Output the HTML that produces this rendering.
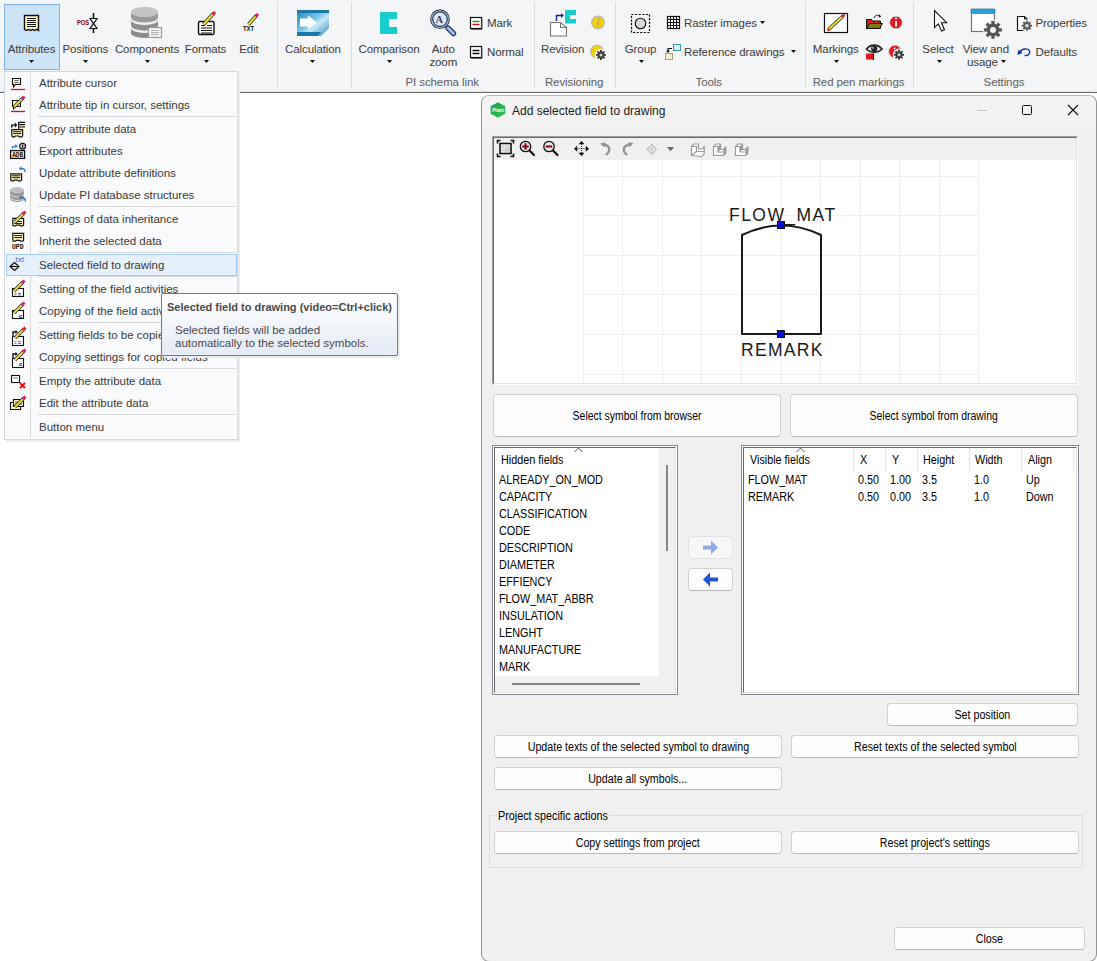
<!DOCTYPE html>
<html><head><meta charset="utf-8">
<style>
html,body{margin:0;padding:0;width:1097px;height:961px;overflow:hidden;background:#fff;font-family:"Liberation Sans",sans-serif;}
.a{position:absolute;}
.t{position:absolute;white-space:nowrap;line-height:14px;font-size:12px;}
.c{position:absolute;white-space:nowrap;line-height:14px;font-size:12px;width:120px;margin-left:-60px;text-align:center;}
#ribbon .t,#ribbon .c{letter-spacing:-0.1px;font-size:11.5px;}
svg{position:absolute;overflow:visible;}
#ribbon{position:absolute;left:0;top:0;width:1097px;height:92px;background:#f4f5f7;border-bottom:1px solid #6b6b6b;}
.rt{color:#3b3b3b;}
.gl{color:#5e5e5e;}
.sep{position:absolute;top:2px;width:1px;height:86px;background:#dcdcdc;}
.dd{position:absolute;width:5px;height:3px;background:#111;clip-path:polygon(0 0,100% 0,50% 100%);}
#menu{position:absolute;left:4px;top:71px;width:232px;height:367px;background:#f9fafc;border:1px solid #d6d7da;box-shadow:inset -1px -1px 0 #fff,2px 2px 0 #ebebeb;}
.mi{position:absolute;left:39px;color:#3a3a3a;font-size:11.5px;line-height:14px;white-space:nowrap;}
.ms{position:absolute;left:38px;width:198px;height:1px;background:#d9d9dc;}
#dlg{position:absolute;left:481px;top:95px;width:614px;height:865px;background:#f0f0f0;border:1px solid #949494;border-top-color:#b8b8b8;border-radius:8px;}
.btn{position:absolute;background:#fdfdfd;border:1px solid #d0d0d0;border-bottom-color:#b8b8b8;border-radius:4px;box-sizing:border-box;font-size:12px;color:#000;text-align:center;white-space:nowrap;}
.lst{position:absolute;background:#fff;box-sizing:border-box;}
.lt{position:absolute;font-size:12px;line-height:14px;color:#000;white-space:nowrap;}
.sx{display:inline-block;transform:scaleX(0.89);transform-origin:50% 50%;}
.sxb{display:inline-block;transform:scaleX(0.87);transform-origin:50% 50%;}
.sx0{display:inline-block;transform:scaleX(0.9);transform-origin:0 50%;}
</style></head><body>
<div id="ribbon">
  <div class="a" style="left:0;top:91px;width:1097px;height:1px;background:#e1e2e4;"></div>
  <!-- Attributes highlighted -->
  <div class="a" style="left:4px;top:4px;width:54px;height:64px;background:#cce4f7;border:1px solid #7eb4ea;"></div>
  <div class="c rt" style="left:31.5px;top:42px;">Attributes</div>
  <div class="dd" style="left:29px;top:60px;"></div>
  <div class="c rt" style="left:85.4px;top:42px;">Positions</div>
  <div class="dd" style="left:83px;top:60px;"></div>
  <div class="c rt" style="left:147px;top:42px;">Components</div>
  <div class="dd" style="left:145px;top:60px;"></div>
  <div class="c rt" style="left:205.5px;top:42px;">Formats</div>
  <div class="dd" style="left:204px;top:60px;"></div>
  <div class="c rt" style="left:249px;top:42px;">Edit</div>
  <div class="sep" style="left:277px;"></div>
  <div class="c rt" style="left:313px;top:42px;">Calculation</div>
  <div class="dd" style="left:310px;top:60px;"></div>
  <div class="sep" style="left:351px;"></div>
  <div class="c rt" style="left:389px;top:42px;">Comparison</div>
  <div class="dd" style="left:387px;top:60px;"></div>
  <div class="c rt" style="left:443.3px;top:42px;">Auto</div>
  <div class="c rt" style="left:443.3px;top:55px;">zoom</div>
  <div class="t rt" style="left:487px;top:16px;">Mark</div>
  <div class="t rt" style="left:487px;top:45px;">Normal</div>
  <div class="c gl" style="left:442.2px;top:75px;">PI schema link</div>
  <div class="sep" style="left:534px;"></div>
  <div class="c rt" style="left:562.6px;top:42px;">Revision</div>
  <div class="c gl" style="left:574.1px;top:75px;">Revisioning</div>
  <div class="sep" style="left:615px;"></div>
  <div class="c rt" style="left:640.5px;top:42px;">Group</div>
  <div class="dd" style="left:639px;top:60px;"></div>
  <div class="t rt" style="left:684px;top:16px;">Raster images</div>
  <div class="dd" style="left:760px;top:21px;"></div>
  <div class="t rt" style="left:684px;top:45px;">Reference drawings</div>
  <div class="dd" style="left:791px;top:50px;"></div>
  <div class="c gl" style="left:708.8px;top:75px;">Tools</div>
  <div class="sep" style="left:805px;"></div>
  <div class="c rt" style="left:835.8px;top:42px;">Markings</div>
  <div class="dd" style="left:834px;top:60px;"></div>
  <div class="c gl" style="left:858.5px;top:75px;">Red pen markings</div>
  <div class="sep" style="left:913px;"></div>
  <div class="c rt" style="left:938px;top:42px;">Select</div>
  <div class="dd" style="left:937px;top:60px;"></div>
  <div class="c rt" style="left:985.8px;top:42px;">View and</div>
  <div class="t rt" style="left:967px;top:55px;">usage</div>
  <div class="dd" style="left:1001px;top:60px;"></div>
  <div class="t rt" style="left:1035.5px;top:16px;">Properties</div>
  <div class="t rt" style="left:1035.5px;top:45px;">Defaults</div>
  <div class="c gl" style="left:1004px;top:75px;">Settings</div>
  <!-- ICONS -->
  <svg style="left:0;top:0" width="1097" height="92" viewBox="0 0 1097 92">
    <!-- Attributes icon -->
    <path d="M24.5 15.5 h14 v15 l-2 -1.2 -2 1.2 -2 -1.2 -2 1.2 -2 -1.2 -2 1.2 -2 -1.2 z" fill="#fff7c2" stroke="#111" stroke-width="1.4"/>
    <g stroke="#111" stroke-width="1.1"><path d="M27 18.5h9M27 20.5h9M27 22.5h9M27 24.5h9M27 26.5h9"/></g>
    <!-- Positions -->
    <text x="77" y="25" font-family="Liberation Sans" font-weight="bold" font-size="6.8" fill="#7a0000" textLength="12.2" lengthAdjust="spacingAndGlyphs">POS</text>
    <path d="M93.5 13v20" stroke="#111" stroke-width="1.6"/>
    <path d="M90 18.5h7l-7 10h7z" fill="#fff" stroke="#111" stroke-width="1.2"/>
    <!-- Components database -->
    <g fill="#9a9a9a">
      <ellipse cx="144.5" cy="12" rx="13.5" ry="5" fill="#c4c4c4"/>
      <path d="M131 12v6a13.5 5 0 0 0 27 0v-6a13.5 5 0 0 1 -27 0z"/>
      <path d="M131 20v6a13.5 5 0 0 0 27 0v-6a13.5 5 0 0 1 -27 0z" fill="#8e8e8e"/>
      <path d="M131 28v5a13.5 5 0 0 0 27 0v-5a13.5 5 0 0 1 -27 0z" fill="#8a8a8a"/>
    </g>
    <path d="M131 18a13.5 5 0 0 0 27 0M131 26a13.5 5 0 0 0 27 0" stroke="#e8e8e8" stroke-width="1" fill="none"/>
    <rect x="148.5" y="27.5" width="13" height="10" fill="#f4f4f4" stroke="#9a9a9a" stroke-width="1.2"/>
    <path d="M151 30.5h8M151 32.5h8M151 34.5h8" stroke="#a8a8a8" stroke-width="0.9"/>
    <!-- Formats -->
    <rect x="198.5" y="21.5" width="15.5" height="13" rx="1.5" fill="#fff" stroke="#111" stroke-width="1.4"/>
    <path d="M201 25.5h4M201 28h11M201 30.5h11M201 33h11M207 25.5h5" stroke="#111" stroke-width="1.2"/>
    <path d="M203.5 24.5 L213.5 13.5" stroke="#222" stroke-width="3.6"/>
    <path d="M203.5 24.5 L213.5 13.5" stroke="#f0e030" stroke-width="2.2"/>
    <path d="M212.5 14.6 L215 12" stroke="#e4204a" stroke-width="3.2"/>
    <!-- Edit TXT -->
    <text x="243" y="31.3" font-family="Liberation Sans" font-weight="bold" font-size="7.5" fill="#111" textLength="11.2" lengthAdjust="spacingAndGlyphs">TXT</text>
    <path d="M248.5 24.5 L256.5 15.5" stroke="#222" stroke-width="3.4"/>
    <path d="M248.5 24.5 L256.5 15.5" stroke="#f0e030" stroke-width="2"/>
    <path d="M255.5 16.6 L258 14" stroke="#e4204a" stroke-width="3"/>
    <!-- Calculation -->
    <defs>
      <linearGradient id="calc" x1="0" y1="0" x2="1" y2="1">
        <stop offset="0" stop-color="#1e86b8"/><stop offset="0.45" stop-color="#7cc4e4"/><stop offset="0.6" stop-color="#c8e8f6"/><stop offset="1" stop-color="#2a8cbc"/>
      </linearGradient>
    </defs>
    <path d="M297 10h32v18l-8 8h-24z" fill="url(#calc)"/>
    <path d="M297 10h32v3h-32zM297 32h24l-3 4h-21z" fill="#1a78aa"/>
    <path d="M300 18.5h8v-3l9 7 -9 7v-3h-8z" fill="#fff"/>
    <!-- Comparison -->
    <path d="M380 12h17v7h-8v8h8v7h-17z" fill="#17cccc"/>
    <!-- Auto zoom -->
    <path d="M448 28 L453.5 33.5" stroke="#1c3664" stroke-width="5.4" stroke-linecap="round"/>
    <path d="M448 28 L453.5 33.5" stroke="#a2bde6" stroke-width="3" stroke-linecap="round"/>
    <circle cx="440" cy="19.2" r="9.3" fill="#d4e4f4" stroke="#34465f" stroke-width="1.2"/>
    <circle cx="440" cy="19.2" r="7.3" fill="#d8e8f6" stroke="#27385a" stroke-width="1.3"/>
    <text x="435.5" y="23.2" font-family="Liberation Serif" font-weight="bold" font-size="10.5" fill="#443a58">A</text>
    <!-- Mark -->
    <rect x="470.5" y="17.5" width="11" height="11" fill="#fff" stroke="#111" stroke-width="1.2"/>
    <path d="M482 18.5v11h-11" stroke="#666" stroke-width="1" fill="none"/>
    <path d="M472.5 21.5h7" stroke="#119911" stroke-width="1.4"/><path d="M472.5 24.5h7" stroke="#e01010" stroke-width="1.4"/>
    <!-- Normal -->
    <rect x="470.5" y="46.5" width="11" height="11" fill="#fff" stroke="#111" stroke-width="1.2"/>
    <path d="M482 47.5v11h-11" stroke="#666" stroke-width="1" fill="none"/>
    <path d="M472.5 50.5h7M472.5 53.5h7" stroke="#111" stroke-width="1.6"/>
    <!-- Revision -->
    <path d="M550.5 22.5h10l6 5v8.5h-16z" fill="#fff" stroke="#777" stroke-width="1.1"/>
    <path d="M560.5 22.5v5h6" fill="none" stroke="#777" stroke-width="1"/>
    <path d="M565 10h11v5h-6v4h6v4.5h-11z" fill="#17cccc"/>
    <path d="M556.5 21v-5.5h5" stroke="#0b2a9a" stroke-width="1.4" fill="none"/>
    <path d="M561 13l3 2.5 -3 2.5z" fill="#0b2a9a"/>
    <!-- info icons -->
    <circle cx="598" cy="22.5" r="6.3" fill="#f2cf00" stroke="#b8b8b8" stroke-width="1.2"/>
    <path d="M598.5 20.5l-1 6" stroke="#b0a080" stroke-width="1.4"/><circle cx="599" cy="18.5" r="0.9" fill="#b0a080"/>
    <circle cx="597" cy="51.5" r="6.3" fill="#f2cf00" stroke="#b8b8b8" stroke-width="1.2"/>
<circle cx="601" cy="54.9" r="6.2" fill="#ffffff"/><path d="M603.90 53.95 L606.00 53.95 L606.00 55.85 L603.90 55.85zM603.72 56.28 L605.21 57.76 L603.86 59.11 L602.38 57.62zM601.95 57.80 L601.95 59.90 L600.05 59.90 L600.05 57.80zM599.62 57.62 L598.14 59.11 L596.79 57.76 L598.28 56.28zM598.10 55.85 L596.00 55.85 L596.00 53.95 L598.10 53.95zM598.28 53.52 L596.79 52.04 L598.14 50.69 L599.62 52.18zM600.05 52.00 L600.05 49.90 L601.95 49.90 L601.95 52.00zM602.38 52.18 L603.86 50.69 L605.21 52.04 L603.72 53.52z" fill="#3a3a3a"/><circle cx="601" cy="54.9" r="3.4" fill="#3a3a3a"/><circle cx="601" cy="54.9" r="1.5" fill="#d4d4d4"/>
    <!-- Group -->
    <rect x="631.5" y="14.5" width="18" height="18" fill="none" stroke="#111" stroke-width="1.2" stroke-dasharray="2.2 1.4"/>
    <circle cx="640.5" cy="23.5" r="5.3" fill="#d8d8d8" stroke="#111" stroke-width="1.1"/>
    <!-- Raster grid -->
    <rect x="667.5" y="16.5" width="12" height="12" fill="#fff" stroke="#111" stroke-width="1.2"/>
    <path d="M670.5 16.5v12M673.5 16.5v12M676.5 16.5v12M667.5 19.5h12M667.5 22.5h12M667.5 25.5h12" stroke="#111" stroke-width="1"/>
    <!-- Reference drawings -->
    <rect x="673.5" y="44.5" width="7" height="6" fill="#d6eef4" stroke="#3a9aaa" stroke-width="1"/>
    <rect x="665.5" y="53.5" width="7" height="6" fill="#f4f0d0" stroke="#a8a470" stroke-width="1"/>
    <path d="M672 48.5h-4v3" stroke="#111" stroke-width="1.1" fill="none"/><path d="M666 50.5l2 2.5 2-2.5z" fill="#111"/>
    <!-- Markings -->
    <rect x="824.5" y="13.5" width="23" height="19" fill="#fff" stroke="#111" stroke-width="1.2"/>
    <path d="M828.5 29.5 L843 16" stroke="#222" stroke-width="3.4"/>
    <path d="M828.5 29.5 L843 16" stroke="#f0e030" stroke-width="2"/>
    <path d="M842 17 L844.5 14.5" stroke="#e4204a" stroke-width="3"/>
    <path d="M827.5 30.5l1.5-1.5" stroke="#e01010" stroke-width="2"/>
    <!-- folder -->
    <path d="M866.5 19.5h5l1 1.5h8v7.5h-14z" fill="#e01818" stroke="#111" stroke-width="1"/>
    <path d="M866.5 28.5l3-5h13l-3 5z" fill="#7a7a10" stroke="#111" stroke-width="1"/>
    <path d="M874 18c1-3 4-3.5 6-2" stroke="#111" stroke-width="1" fill="none"/><path d="M879 14.5l2.5 2 -2.8 1z" fill="#111"/>
    <!-- red info -->
    <circle cx="896" cy="22.5" r="6.3" fill="#e01824" stroke="#c8c8c8" stroke-width="1"/>
    <path d="M896 21v5.5" stroke="#fff" stroke-width="1.8"/><circle cx="896" cy="18.6" r="1" fill="#fff"/>
    <!-- eye -->
    <path d="M866.5 49c4-5.2 11.5-5.2 15.5 0c-4 4.4-11.5 4.4-15.5 0z" fill="#e8e8e8" stroke="#2a2a2a" stroke-width="1.8"/>
    <circle cx="874.2" cy="48.8" r="3.1" fill="#222"/><circle cx="873" cy="47.8" r="0.9" fill="#ddd"/>
    <rect x="866" y="53.5" width="7" height="6" fill="#e01818"/><path d="M873.5 53.5v6.5" stroke="#111" stroke-width="1.2"/>
    <!-- red info gear -->
    <circle cx="895" cy="51.5" r="6.3" fill="#e01824" stroke="#c8c8c8" stroke-width="1"/>
    <circle cx="894.5" cy="48.5" r="1" fill="#fff"/>
<circle cx="899" cy="54.8" r="6.2" fill="#ffffff"/><path d="M901.90 53.85 L904.00 53.85 L904.00 55.75 L901.90 55.75zM901.72 56.18 L903.21 57.66 L901.86 59.01 L900.38 57.52zM899.95 57.70 L899.95 59.80 L898.05 59.80 L898.05 57.70zM897.62 57.52 L896.14 59.01 L894.79 57.66 L896.28 56.18zM896.10 55.75 L894.00 55.75 L894.00 53.85 L896.10 53.85zM896.28 53.42 L894.79 51.94 L896.14 50.59 L897.62 52.08zM898.05 51.90 L898.05 49.80 L899.95 49.80 L899.95 51.90zM900.38 52.08 L901.86 50.59 L903.21 51.94 L901.72 53.42z" fill="#3a3a3a"/><circle cx="899" cy="54.8" r="3.4" fill="#3a3a3a"/><circle cx="899" cy="54.8" r="1.5" fill="#d4d4d4"/>
    <!-- Select cursor -->
    <path d="M934.5 10.5v17l3.8-3.6 3.2 7.2 3-1.4-3.1-7h5.2z" fill="#fff" stroke="#111" stroke-width="1.1"/>
    <!-- View and usage -->
    <rect x="971.5" y="9.5" width="23" height="22" fill="#fff" stroke="#777" stroke-width="1.2"/>
    <rect x="971" y="9" width="24" height="4.5" rx="1" fill="#27a0e0" stroke="#3070b0" stroke-width="0.6"/>
<circle cx="993" cy="29.9" r="10.1" fill="#f4f5f7"/><path d="M998.80 28.25 L1001.90 28.25 L1001.90 31.55 L998.80 31.55zM998.27 32.83 L1000.46 35.03 L998.13 37.36 L995.93 35.17zM994.65 35.70 L994.65 38.80 L991.35 38.80 L991.35 35.70zM990.07 35.17 L987.87 37.36 L985.54 35.03 L987.73 32.83zM987.20 31.55 L984.10 31.55 L984.10 28.25 L987.20 28.25zM987.73 26.97 L985.54 24.77 L987.87 22.44 L990.07 24.63zM991.35 24.10 L991.35 21.00 L994.65 21.00 L994.65 24.10zM995.93 24.63 L998.13 22.44 L1000.46 24.77 L998.27 26.97z" fill="#555"/><circle cx="993" cy="29.9" r="6.3" fill="#555"/><circle cx="993" cy="29.9" r="3" fill="#f4f5f7"/>
    <!-- Properties -->
    <path d="M1017.5 16.5h7l2.5 2.5v11.5h-9.5z" fill="#fff" stroke="#111" stroke-width="1.2"/><path d="M1024.5 16.5v2.5h2.5" fill="none" stroke="#111" stroke-width="1"/>
<circle cx="1026.9" cy="25.7" r="6.2" fill="#f4f5f7"/><path d="M1029.90 24.75 L1031.90 24.75 L1031.90 26.65 L1029.90 26.65zM1029.69 27.15 L1031.11 28.56 L1029.76 29.91 L1028.35 28.49zM1027.85 28.70 L1027.85 30.70 L1025.95 30.70 L1025.95 28.70zM1025.45 28.49 L1024.04 29.91 L1022.69 28.56 L1024.11 27.15zM1023.90 26.65 L1021.90 26.65 L1021.90 24.75 L1023.90 24.75zM1024.11 24.25 L1022.69 22.84 L1024.04 21.49 L1025.45 22.91zM1025.95 22.70 L1025.95 20.70 L1027.85 20.70 L1027.85 22.70zM1028.35 22.91 L1029.76 21.49 L1031.11 22.84 L1029.69 24.25z" fill="#555"/><circle cx="1026.9" cy="25.7" r="3.5" fill="#555"/><circle cx="1026.9" cy="25.7" r="1.8" fill="#dcdce8"/>
    <!-- Defaults -->
    <path d="M1020 52.5c1-4 8-5 9.5-1.5c1.2 3-2 5-5 4.5" stroke="#1030a0" stroke-width="1.4" fill="none"/>
    <path d="M1017.5 55l1-5.5 4 3.5z" fill="#1030a0"/>
  </svg>
</div>

<!-- DIALOG -->
<div id="dlg">
  <div class="a" style="left:0;top:0;width:614px;height:30px;background:#f3f3f3;border-radius:8px 8px 0 0;"></div>
</div>
<!-- title -->
<svg style="left:490px;top:102px" width="16" height="16" viewBox="0 0 16 16">
  <defs><linearGradient id="hx" x1="0" y1="0" x2="1" y2="1"><stop offset="0" stop-color="#13a24a"/><stop offset="1" stop-color="#3cc060"/></linearGradient></defs>
  <path d="M8 0.3 L15.3 4.2 V11.8 L8 15.7 L0.7 11.8 V4.2z" fill="url(#hx)"/>
  <text x="2.2" y="10.3" font-family="Liberation Sans" font-weight="bold" font-size="5.2" fill="#fff" textLength="11.6" lengthAdjust="spacingAndGlyphs">Plant</text>
</svg>
<div class="t" style="left:512px;top:104px;color:#1b1b1b;">Add selected field to drawing</div>
<div class="a" style="left:977px;top:110px;width:10px;height:1px;background:#c4c4c4;"></div>
<div class="a" style="left:1022px;top:105px;width:8px;height:8px;border:1px solid #111;border-radius:1.5px;"></div>
<svg style="left:1067px;top:104px" width="12" height="12" viewBox="0 0 12 12"><path d="M1 1L11 11M11 1L1 11" stroke="#111" stroke-width="1.1"/></svg>

<!-- preview box -->
<div class="a" style="left:492px;top:136px;width:586px;height:249px;background:#fff;border-top:1px solid #a0a0a0;border-left:1px solid #a0a0a0;border-right:1px solid #fff;border-bottom:1px solid #fff;box-sizing:border-box;"></div>
<div class="a" style="left:493px;top:137px;width:584px;height:247px;background:#fff;border-top:1px solid #696969;border-left:1px solid #696969;border-right:1px solid #e3e3e3;border-bottom:1px solid #e3e3e3;box-sizing:border-box;"></div>
<div class="a" style="left:494px;top:138px;width:582px;height:22px;background:#f0f0f0;"></div>
<svg style="left:494px;top:138px" width="270" height="22" viewBox="494 138 270 22">
  <!-- fit -->
  <path d="M497.5 143.5v-3h3M510.5 140.5h3v3M513.5 153.5v3h-3M500.5 156.5h-3v-3" stroke="#111" stroke-width="1.6" fill="none"/>
  <rect x="500" y="143.5" width="11" height="10" fill="#fff" stroke="#111" stroke-width="1.6"/>
  <path d="M502 146h7v5h-7z" fill="#e8e8e8" stroke="#bbb" stroke-width="0.8"/>
  <path d="M505.5 148.5h3.5v2.5h-3.5z" fill="none" stroke="#bbb" stroke-width="0.8"/>
  <!-- zoom + -->
  <path d="M529.5 150.5l4.5 4.5" stroke="#111" stroke-width="2.2" stroke-linecap="round"/>
  <circle cx="525.5" cy="146.5" r="5.2" fill="#e4e4e4" stroke="#111" stroke-width="1.3"/>
  <path d="M525.5 143.3v6.4M522.3 146.5h6.4" stroke="#8c0010" stroke-width="2"/>
  <!-- zoom - -->
  <path d="M553 150.5l4.5 4.5" stroke="#111" stroke-width="2.2" stroke-linecap="round"/>
  <circle cx="549" cy="146.5" r="5.2" fill="#e4e4e4" stroke="#111" stroke-width="1.3"/>
  <path d="M545.8 146.5h6.4" stroke="#8c0010" stroke-width="2"/>
  <!-- pan -->
  <path d="M581.5 144v9.5M576.5 148.7h10" stroke="#111" stroke-width="0.9" stroke-dasharray="1 1"/>
  <path d="M581.5 141l-3 3.2h6z M581.5 156l-3-3.2h6z M574 148.7l3.2-3v6z M589 148.7l-3.2-3v6z" fill="#111"/>
  <!-- undo -->
  <path d="M602 144.5c6 0 8 3 7 6.5c-0.6 2-2 3-3 4" stroke="#959595" stroke-width="2.4" fill="none"/>
  <path d="M600 143.5l5.5-1.2-1.2 5z" fill="#959595"/>
  <!-- redo -->
  <path d="M631.5 144.5c-6 0-8.5 3-7.5 6.5c0.6 2 2 3 3 4" stroke="#959595" stroke-width="2.4" fill="none"/>
  <path d="M633.5 143l-5.5-0.8 1.2 5z" fill="#959595"/>
  <!-- snap -->
  <path d="M651.7 144.5l4.7 4.8-4.7 4.8-4.7-4.8z" fill="none" stroke="#bdbdbd" stroke-width="1.2"/>
  <path d="M651.7 146.5v5.6M648.9 149.3h5.6" stroke="#bdbdbd" stroke-width="0.9"/>
  <!-- dropdown -->
  <path d="M666.8 147h7.4l-3.7 4.2z" fill="#6a6a72"/>
  <!-- 3d blocks -->
  <g fill="#fff" stroke="#9a9a9a" stroke-width="1.2">
    <path d="M691.5 155.5v-9l2.5-2.5h5l-0.5 0v5h3.5l2.2-2.2v7.2l-2.5 2.5z"/>
    <path d="M691.5 146.5h5v5h8M696.5 151.5l-5 4" fill="none"/>
    <path d="M713.5 155.5v-9l2.5-2.5h4.5v5.5h3l2.3-2.3v6l-2.5 2.3z"/>
    <path d="M713.5 146.5h4.5v5.5h5.5" fill="none"/>
    <path d="M735.5 155.5v-9l2.5-2.5h4.5v5.5h3l2.3-2.3v6l-2.5 2.3z"/>
    <path d="M735.5 146.5h4.5v5.5h5.5" fill="none"/>
  </g>
  <path d="M718 146.5l2.5-2.5v5.5l-2.5 2.5zM723.5 155.5l2.3-2.3v-6l-2.3 2.3z" fill="#9a9a9a"/>
  <path d="M740 146.5l2.5-2.5v5.5l-2.5 2.5zM745.5 155.5l2.3-2.3v-6l-2.3 2.3z" fill="#9a9a9a"/>
</svg>
<svg style="left:494px;top:160px" width="582" height="223" viewBox="494 160 582 223">
  <g stroke="#eeeeee" stroke-width="1">
    <path d="M583.5 160v223M622.5 160v223M662.5 160v223M701.5 160v223M741.5 160v223M781.5 160v223M820.5 160v223M860.5 160v223M899.5 160v223M939.5 160v223M978.5 160v223"/>
    <path d="M583.5 176.5h395M583.5 215.5h395M583.5 255.5h395M583.5 294.5h395M583.5 334.5h395M583.5 374.5h395"/>
  </g>
  <path d="M742 334V235c26-12.5 53-12.5 79 0V334z" fill="none" stroke="#1a1a1a" stroke-width="2" stroke-linejoin="round"/>
  <rect x="777.5" y="221.5" width="7" height="7" fill="#0010d0" stroke="#111" stroke-width="1"/>
  <rect x="777.5" y="330.5" width="7" height="7" fill="#0010d0" stroke="#111" stroke-width="1"/>
</svg>
<div class="t" style="left:729px;top:205px;font-size:17.5px;line-height:20px;letter-spacing:1.45px;color:#1a1a1a;">FLOW_MAT</div>
<div class="t" style="left:741px;top:340px;font-size:17.5px;line-height:20px;letter-spacing:1.3px;color:#1a1a1a;">REMARK</div>

<!-- buttons -->
<div class="btn" style="left:493px;top:394px;width:288px;height:43px;line-height:43px;"><span class="sxb">Select symbol from browser</span></div>
<div class="btn" style="left:790px;top:394px;width:288px;height:43px;line-height:43px;"><span class="sxb">Select symbol from drawing</span></div>

<!-- hidden list -->
<div class="lst" style="left:492px;top:445px;width:186px;height:250px;border-top:1px solid #828790;border-left:1px solid #828790;border-right:1px solid #828790;border-bottom:1px solid #828790;"></div>
<div class="lst" style="left:494px;top:447px;width:182px;height:246px;border-top:1px solid #696969;border-left:1px solid #696969;border-right:1px solid #e3e3e3;border-bottom:1px solid #e3e3e3;"></div>
<div class="a" style="left:659px;top:448px;width:16px;height:244px;background:#f0f0f0;"></div>
<div class="a" style="left:495px;top:676px;width:180px;height:16px;background:#f0f0f0;"></div>
<div class="a" style="left:666px;top:465px;width:2px;height:86px;background:#858585;"></div>
<div class="a" style="left:512px;top:683px;width:128px;height:2px;background:#858585;"></div>
<div class="lt" style="left:501px;top:453px;"><span class="sx0">Hidden fields</span></div>
<svg style="left:574px;top:447px" width="9" height="6" viewBox="0 0 9 6"><path d="M0.5 5L4.5 1L8.5 5" stroke="#555" stroke-width="1" fill="none"/></svg>
<div class="lt" style="left:499px;top:472px;line-height:17px;"><span class="sx0">ALREADY_ON_MOD<br>CAPACITY<br>CLASSIFICATION<br>CODE<br>DESCRIPTION<br>DIAMETER<br>EFFIENCY<br>FLOW_MAT_ABBR<br>INSULATION<br>LENGHT<br>MANUFACTURE<br>MARK</span></div>

<!-- arrow buttons -->
<div class="btn" style="left:688px;top:536px;width:45px;height:23px;background:#f7f7f7;border-color:#e2e2e2;"></div>
<svg style="left:702px;top:540px" width="17" height="15" viewBox="0 0 17 15"><path d="M1 5.5h8v-5l7 7-7 7v-5h-8z" fill="#8fabe4"/></svg>
<div class="btn" style="left:688px;top:568px;width:45px;height:23px;"></div>
<svg style="left:702px;top:572px" width="17" height="15" viewBox="0 0 17 15"><path d="M16 5.5h-8v-5l-7 7 7 7v-5h8z" fill="#2456cc"/></svg>

<!-- visible list -->
<div class="lst" style="left:741px;top:445px;width:338px;height:250px;border:1px solid #828790;"></div>
<div class="lst" style="left:743px;top:447px;width:334px;height:246px;border-top:1px solid #696969;border-left:1px solid #696969;border-right:1px solid #e3e3e3;border-bottom:1px solid #e3e3e3;"></div>
<div class="a" style="left:853px;top:448px;width:1px;height:23px;background:#e5e5e5;"></div>
<div class="a" style="left:885px;top:448px;width:1px;height:23px;background:#e5e5e5;"></div>
<div class="a" style="left:917px;top:448px;width:1px;height:23px;background:#e5e5e5;"></div>
<div class="a" style="left:969px;top:448px;width:1px;height:23px;background:#e5e5e5;"></div>
<div class="a" style="left:1021px;top:448px;width:1px;height:23px;background:#e5e5e5;"></div>
<div class="a" style="left:1073px;top:448px;width:1px;height:23px;background:#e5e5e5;"></div>
<svg style="left:796px;top:447px" width="9" height="6" viewBox="0 0 9 6"><path d="M0.5 5L4.5 1L8.5 5" stroke="#555" stroke-width="1" fill="none"/></svg>
<div class="lt" style="left:750px;top:453px;"><span class="sx0">Visible fields</span></div>
<div class="lt" style="left:860px;top:453px;"><span class="sx0">X</span></div>
<div class="lt" style="left:892px;top:453px;"><span class="sx0">Y</span></div>
<div class="lt" style="left:923px;top:453px;"><span class="sx0">Height</span></div>
<div class="lt" style="left:975px;top:453px;"><span class="sx0">Width</span></div>
<div class="lt" style="left:1028px;top:453px;"><span class="sx0">Align</span></div>
<div class="lt" style="left:748px;top:472px;line-height:17px;"><span class="sx0">FLOW_MAT<br>REMARK</span></div>
<div class="lt" style="left:858px;top:472px;line-height:17px;"><span class="sx0">0.50<br>0.50</span></div>
<div class="lt" style="left:890px;top:472px;line-height:17px;"><span class="sx0">1.00<br>0.00</span></div>
<div class="lt" style="left:922px;top:472px;line-height:17px;"><span class="sx0">3.5<br>3.5</span></div>
<div class="lt" style="left:974px;top:472px;line-height:17px;"><span class="sx0">1.0<br>1.0</span></div>
<div class="lt" style="left:1026px;top:472px;line-height:17px;"><span class="sx0">Up<br>Down</span></div>

<!-- lower buttons -->
<div class="btn" style="left:887px;top:703px;width:191px;height:23px;line-height:23px;"><span class="sx">Set position</span></div>
<div class="btn" style="left:494px;top:735px;width:288px;height:23px;line-height:23px;"><span class="sx">Update texts of the selected symbol to drawing</span></div>
<div class="btn" style="left:791px;top:735px;width:288px;height:23px;line-height:23px;"><span class="sx">Reset texts of the selected symbol</span></div>
<div class="btn" style="left:494px;top:767px;width:288px;height:23px;line-height:23px;"><span class="sx">Update all symbols...</span></div>
<div class="a" style="left:489px;top:815px;width:592px;height:51px;border:1px solid #dcdcdc;"></div>
<div class="lt" style="left:495px;top:809px;width:114px;padding-left:3px;box-sizing:border-box;overflow:hidden;background:#f0f0f0;"><span class="sx0">Project specific actions</span></div>
<div class="btn" style="left:494px;top:831px;width:288px;height:23px;line-height:23px;"><span class="sx">Copy settings from project</span></div>
<div class="btn" style="left:791px;top:831px;width:288px;height:23px;line-height:23px;"><span class="sx">Reset project's settings</span></div>
<div class="btn" style="left:894px;top:927px;width:191px;height:23px;line-height:23px;"><span class="sx">Close</span></div>


<!-- MENU -->
<div id="menu">
  <div class="a" style="left:25px;top:1px;width:1px;height:365px;background:#dcdcdf;"></div>
  <div class="a" style="left:1px;top:182px;width:229px;height:20px;background:#e4f0fb;border:1px solid #9fcbef;"></div>
</div>
<div class="mi" style="top:76px;">Attribute cursor</div>
<div class="mi" style="top:98px;">Attribute tip in cursor, settings</div>
<div class="ms" style="top:116px;"></div>
<div class="mi" style="top:122px;">Copy attribute data</div>
<div class="mi" style="top:144px;">Export attributes</div>
<div class="mi" style="top:166px;">Update attribute definitions</div>
<div class="mi" style="top:188px;">Update PI database structures</div>
<div class="ms" style="top:206px;"></div>
<div class="mi" style="top:212px;">Settings of data inheritance</div>
<div class="mi" style="top:234px;">Inherit the selected data</div>
<div class="ms" style="top:252px;"></div>
<div class="mi" style="top:258px;">Selected field to drawing</div>
<div class="ms" style="top:276px;"></div>
<div class="mi" style="top:282px;">Setting of the field activities</div>
<div class="mi" style="top:304px;">Copying of the field activities</div>
<div class="ms" style="top:322px;"></div>
<div class="mi" style="top:328px;">Setting fields to be copied</div>
<div class="mi" style="top:350px;">Copying settings for copied fields</div>
<div class="ms" style="top:368px;"></div>
<div class="mi" style="top:374px;">Empty the attribute data</div>
<div class="mi" style="top:396px;">Edit the attribute data</div>
<div class="ms" style="top:414px;"></div>
<div class="mi" style="top:420px;">Button menu</div>
<svg style="left:0;top:0" width="40" height="440" viewBox="0 0 40 440">
  <defs>
    <g id="doc"><path d="M0.5 0.5h11v8l-1.4 -1 -1.4 1 -1.4 -1 -1.4 1 -1.4 -1 -1.4 1 -1.4 -1 -1.3 1z" fill="#fff7c2" stroke="#111" stroke-width="1.1"/><path d="M2.5 3h7M2.5 5h7" stroke="#555" stroke-width="1"/></g>
    <g id="pen"><path d="M0 10 L9 1" stroke="#222" stroke-width="3.2"/><path d="M0 10 L9 1" stroke="#f0e030" stroke-width="1.8"/><path d="M8 2 L10.5 -0.5" stroke="#e4204a" stroke-width="3"/><path d="M7.6 2.4l1 -1" stroke="#d020d0" stroke-width="2"/></g>
  </defs>
  <!-- 1 attribute cursor -->
  <path d="M12.5 78.5h8v6h-5l-2 2.5v-2.5h-1z" fill="#fff7c2" stroke="#111" stroke-width="1.1"/>
  <path d="M14.5 80.5h4M14.5 82.5h4" stroke="#555" stroke-width="0.9"/>
  <path d="M11 89.5h14" stroke="#e01010" stroke-width="1.3"/>
  <!-- 2 tip settings -->
  <path d="M12.5 100.5h8v6h-5l-2 2.5v-2.5h-1z" fill="#fff7c2" stroke="#111" stroke-width="1.1"/>
  <use href="#pen" x="14" y="97"/>
  <path d="M11 111.5h14" stroke="#e01010" stroke-width="1.3"/>
  <!-- 3 copy -->
  <path d="M19 122.5h6v7h-6z" fill="#fff7c2"/>
  <path d="M18.7 129.5v-7.2h6.5M19.5 124.6h5.5M19.5 127h5.5" stroke="#111" stroke-width="1.2" fill="none"/>
  <path d="M11.8 129.7h10.8v6.3l-0.8 0.8h-2.3l-0.8-0.8h-3.4l-0.8 0.8h-2l-0.7-0.8z" fill="#fff7c2" stroke="#111" stroke-width="1.2"/>
  <path d="M13.2 131.7h8M13.2 133.6h8" stroke="#111" stroke-width="1"/>
  <path d="M11.8 127.6v-2.5h3.5" stroke="#111" stroke-width="1.4" fill="none"/><path d="M14.8 122.3l2.6 2.8-2.6 2.6z" fill="#111"/>
  <!-- 4 export ADB -->
  <rect x="10.6" y="150.6" width="14" height="7.8" fill="#fff7c2" stroke="#111" stroke-width="1.3"/>
  <text x="12.2" y="157.2" font-family="Liberation Mono" font-weight="bold" font-size="7" fill="#111" textLength="11" lengthAdjust="spacingAndGlyphs">ADB</text>
  <circle cx="22.6" cy="146.3" r="2.9" fill="#d8d8d8" stroke="#111" stroke-width="1.2"/>
  <path d="M22.6 144.7v3.2" stroke="#111" stroke-width="1.2"/>
  <path d="M12.3 148.4c0-1.5 1-2.2 3.2-2.2" stroke="#3a78c8" stroke-width="1.3" fill="none"/><path d="M15.3 143.9l2.6 2.3-2.6 2.3z" fill="#3a78c8"/>
  <!-- 5 update attr defs -->
  <path d="M10.8 173.8h10.8v6.3l-0.8 0.8h-2.3l-0.8-0.8h-3.4l-0.8 0.8h-2l-0.7-0.8z" fill="#fff7c2" stroke="#111" stroke-width="1.2"/>
  <path d="M12.2 175.8h8M12.2 177.7h8" stroke="#111" stroke-width="1"/>
  <path d="M25.3 172.3c0-2.6-1.6-3.8-4.3-3.8" stroke="#3a78c8" stroke-width="1.3" fill="none"/><path d="M21.3 166.2l-2.6 2.3 2.6 2.3z" fill="#3a78c8"/>
  <!-- 6 update PI database -->
  <ellipse cx="17" cy="190" rx="7" ry="3" fill="#c0c0c0"/>
  <path d="M10 190v9a7 3 0 0 0 14 0v-9a7 3 0 0 1 -14 0z" fill="#9a9a9a"/>
  <path d="M10 194a7 3 0 0 0 14 0M10 197.5a7 3 0 0 0 14 0" stroke="#e0e0e0" stroke-width="0.9" fill="none"/>
  <path d="M25.5 201.5c0-3-2-4-4.5-4" stroke="#3a6ec0" stroke-width="1.3" fill="none"/><path d="M21.5 195l-2.5 2.5 2.5 2.5z" fill="#3a6ec0"/>
  <!-- 7 settings inheritance -->
  <path d="M12.8 218.3h10.8v6.8l-0.8 0.8h-2.3l-0.8-0.8h-3.4l-0.8 0.8h-2l-0.7-0.8z" fill="#fff7c2" stroke="#111" stroke-width="1.2"/>
  <path d="M16 221.5h6M14.2 223.4h8" stroke="#111" stroke-width="1"/>
  <use href="#pen" x="15" y="212"/>
  <!-- 8 inherit UPD -->
  <path d="M12.8 233.3h10.8v7l-0.8 0.8h-2.3l-0.8-0.8h-3.4l-0.8 0.8h-2l-0.7-0.8z" fill="#fff7c2" stroke="#111" stroke-width="1.2"/>
  <path d="M14.2 235.6h8M14.2 237.6h8" stroke="#111" stroke-width="1"/>
  <text x="12" y="248.5" font-family="Liberation Mono" font-weight="bold" font-size="6.5" fill="#111" textLength="11.5" lengthAdjust="spacingAndGlyphs">UPD</text>
  <!-- 9 selected field to drawing -->
  <path d="M10 266.5l4.5 -4 4.5 4 -4.5 4z" fill="#ddd" stroke="#111" stroke-width="1.1"/>
  <path d="M10 266.5h9" stroke="#111" stroke-width="1"/>
  <text x="15.5" y="262" font-family="Liberation Sans" font-size="8" fill="#3a6ec0">txt</text>
  <!-- 10 setting of field activities -->
  <rect x="12.5" y="288.5" width="11" height="8" fill="#fff" stroke="#111" stroke-width="1.1"/>
  <path d="M14.5 293.5h2M18 293.5h3M14.5 295h2M18 295h3" stroke="#555" stroke-width="0.8"/>
  <use href="#pen" x="14" y="281"/>
  <!-- 11 copying field activities -->
  <rect x="12.5" y="310.5" width="11" height="8" fill="#fff" stroke="#111" stroke-width="1.1"/>
  <text x="19" y="317.5" font-family="Liberation Sans" font-weight="bold" font-size="6" fill="#111">c</text>
  <use href="#pen" x="14" y="303"/>
  <!-- 12 setting fields to be copied -->
  <rect x="12.5" y="336.5" width="11" height="9" fill="#fff" stroke="#111" stroke-width="1.1"/>
  <path d="M14.5 341.5h2M18 341.5h3M14.5 343.5h2M18 343.5h3" stroke="#555" stroke-width="0.8"/>
  <path d="M13 336v-4h3" stroke="#111" stroke-width="1.3" fill="none"/><path d="M15.5 330l2.3 2-2.3 2z" fill="#111"/>
  <use href="#pen" x="15" y="328"/>
  <!-- 13 copying settings for copied -->
  <rect x="12.5" y="358.5" width="11" height="9" fill="#fff" stroke="#111" stroke-width="1.1"/>
  <text x="19" y="366" font-family="Liberation Sans" font-weight="bold" font-size="6" fill="#111">c</text>
  <path d="M13 358v-4h3" stroke="#111" stroke-width="1.3" fill="none"/><path d="M15.5 352l2.3 2-2.3 2z" fill="#111"/>
  <use href="#pen" x="15" y="350"/>
  <!-- 14 empty -->
  <rect x="11.5" y="375.5" width="8" height="7" fill="#fff" stroke="#111" stroke-width="1.1"/>
  <path d="M13 378h5" stroke="#555" stroke-width="0.8"/>
  <path d="M20 383l5 5M25 383l-5 5" stroke="#e01010" stroke-width="1.8"/>
  <!-- 15 edit -->
  <path d="M10.5 402.5h10v7h-10z" fill="#fff7c2" stroke="#111" stroke-width="1.1"/>
  <path d="M13.5 399.5h10v7h-10z" fill="#fff7c2" stroke="#111" stroke-width="1.1"/>
  <path d="M15 402h7M15 404h7" stroke="#444" stroke-width="0.9"/>
  <use href="#pen" x="15" y="397"/>
</svg>

<!-- TOOLTIP -->
<div class="a" style="left:161px;top:293px;width:235px;height:61px;border:1px solid #767676;border-radius:2px;background:linear-gradient(#ffffff,#e4ebf6);box-shadow:inset -1px -1px 0 #eef3fc,2px 2px 0 #ededed;"></div>
<div class="t" style="left:167px;top:300px;font-size:11px;font-weight:bold;color:#4a4a4a;">Selected field to drawing (video=Ctrl+click)</div>
<div class="t" style="left:175px;top:324px;font-size:11.5px;line-height:13px;color:#4a4a4a;">Selected fields will be added<br>automatically to the selected symbols.</div>
</body></html>
